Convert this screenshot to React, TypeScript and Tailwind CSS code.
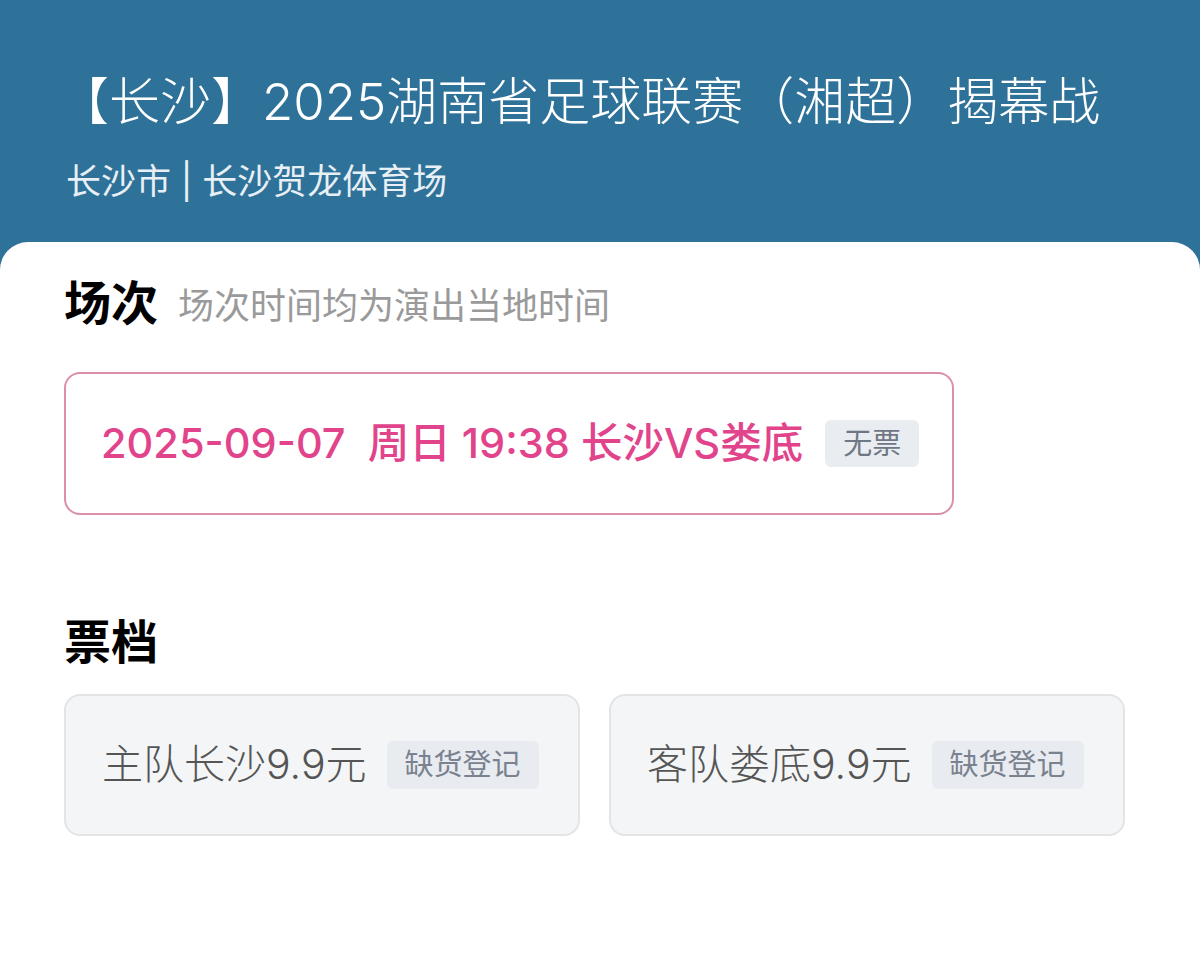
export default function App() {
  const font = { fontFamily: 'Inter, "Noto Sans CJK SC", "Noto Sans", sans-serif' }

  return (
    <div className="min-h-[979px] bg-[#2e7199] flex flex-col" style={font}>
      <div className="pl-[58px] pt-[72px] h-[242px] text-white">
        <h1 className="text-[51px] leading-[60px] font-light">
          【长沙】2025湖南省足球联赛（湘超）揭幕战
        </h1>
        <p className="mt-[26px] pl-[8px] text-[35px] leading-[46px] text-[#e8eff5]">长沙市 | 长沙贺龙体育场</p>
      </div>

      <div className="flex-1 bg-white rounded-t-[28px] px-[64px] pt-[32px]">
        <div className="flex items-end gap-[20px]">
          <h2 className="text-[47px] leading-[58px] font-bold text-black">场次</h2>
          <span className="text-[36px] leading-[52px] text-[#9a9a9a]">场次时间均为演出当地时间</span>
        </div>

        <div className="mt-[40px] w-[890px] h-[143px] border-2 border-[#dc8fab] rounded-[16px] flex items-center pl-[35px]">
          <span className="text-[41.5px] font-medium text-[#e2448c] whitespace-pre">2025-09-07  周日 19:38 长沙VS娄底</span>
          <span className="ml-[22px] h-[47px] px-[18px] rounded-[6px] bg-[#e9edf1] text-[29px] text-[#707784] flex items-center">无票</span>
        </div>

        <h2 className="mt-[98px] text-[47px] leading-[58px] font-bold text-black">票档</h2>

        <div className="mt-[23px] flex gap-[29px]">
          {['主队长沙9.9元', '客队娄底9.9元'].map((t) => (
            <div
              key={t}
              className="w-[516px] h-[142px] bg-[#f4f5f7] border-2 border-[#e3e4e6] rounded-[16px] flex items-center pl-[36px]"
            >
              <span className="text-[41px] font-light text-[#555]">{t}</span>
              <span className="ml-[20px] h-[48px] px-[18px] rounded-[6px] bg-[#e8ecf0] text-[29px] text-[#7a8290] flex items-center">
                缺货登记
              </span>
            </div>
          ))}
        </div>
      </div>
    </div>
  )
}
